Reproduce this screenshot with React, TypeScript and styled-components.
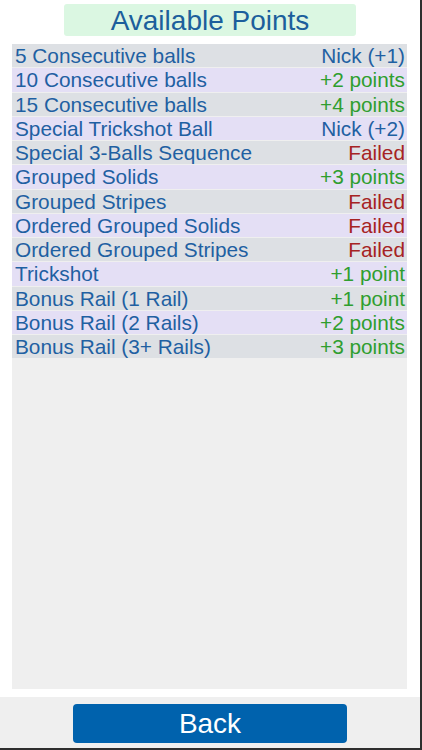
import React from "react";
import styled, { createGlobalStyle } from "styled-components";

const Global = createGlobalStyle`
  html, body { margin: 0; padding: 0; background: #ffffff; }
  * { box-sizing: border-box; }
`;

const Screen = styled.div`
  width: 422px;
  height: 750px;
  display: flex;
  flex-direction: column;
  background: #ffffff;
  border-right: 2px solid #2e2e2e;
  border-bottom: 2px solid #2e2e2e;
  font-family: "Liberation Sans", Arial, sans-serif;
`;

const Header = styled.div`
  display: flex;
  justify-content: center;
  padding-top: 4px;
`;

const Title = styled.div`
  width: 292px;
  height: 32px;
  background: #dbf7e2;
  border-radius: 3px;
  color: #1c5f9c;
  font-size: 28px;
  line-height: 34px;
  text-align: center;
`;

const Panel = styled.div`
  flex: 1;
  margin: 8px 13px 0 12px;
  background: #efefef;
  display: flex;
  flex-direction: column;
  gap: 1px;
`;

const Row = styled.div<{ $alt: boolean }>`
  height: 23.25px;
  display: flex;
  justify-content: space-between;
  align-items: center;
  padding: 1px 2px 0 3px;
  background: ${(p) => (p.$alt ? "#e4dff5" : "#dde0e4")};
  font-size: 20.8px;
  white-space: nowrap;
`;

const Label = styled.span`
  color: #1f60a2;
`;

const Value = styled.span<{ $kind: "nick" | "good" | "bad" }>`
  color: ${(p) =>
    p.$kind === "nick" ? "#1f60a2" : p.$kind === "good" ? "#2f9e2f" : "#a62323"};
`;

const Footer = styled.div`
  margin-top: 8px;
  height: 51px;
  background: #efefef;
  display: flex;
  justify-content: center;
  padding-top: 7px;
`;

const BackButton = styled.button`
  width: 274px;
  height: 39px;
  border: none;
  border-radius: 4px;
  background: #0062ad;
  color: #ffffff;
  font-family: "Liberation Sans", Arial, sans-serif;
  font-size: 28px;
  line-height: 39px;
  padding: 0;
  cursor: pointer;
`;

type Kind = "nick" | "good" | "bad";
const items: [string, string, Kind][] = [
  ["5 Consecutive balls", "Nick (+1)", "nick"],
  ["10 Consecutive balls", "+2 points", "good"],
  ["15 Consecutive balls", "+4 points", "good"],
  ["Special Trickshot Ball", "Nick (+2)", "nick"],
  ["Special 3-Balls Sequence", "Failed", "bad"],
  ["Grouped Solids", "+3 points", "good"],
  ["Grouped Stripes", "Failed", "bad"],
  ["Ordered Grouped Solids", "Failed", "bad"],
  ["Ordered Grouped Stripes", "Failed", "bad"],
  ["Trickshot", "+1 point", "good"],
  ["Bonus Rail (1 Rail)", "+1 point", "good"],
  ["Bonus Rail (2 Rails)", "+2 points", "good"],
  ["Bonus Rail (3+ Rails)", "+3 points", "good"],
];

export default function App() {
  return (
    <>
      <Global />
      <Screen>
        <Header>
          <Title>Available Points</Title>
        </Header>
        <Panel>
          {items.map(([label, value, kind], i) => (
            <Row key={label} $alt={i % 2 === 1}>
              <Label>{label}</Label>
              <Value $kind={kind}>{value}</Value>
            </Row>
          ))}
        </Panel>
        <Footer>
          <BackButton>Back</BackButton>
        </Footer>
      </Screen>
    </>
  );
}
